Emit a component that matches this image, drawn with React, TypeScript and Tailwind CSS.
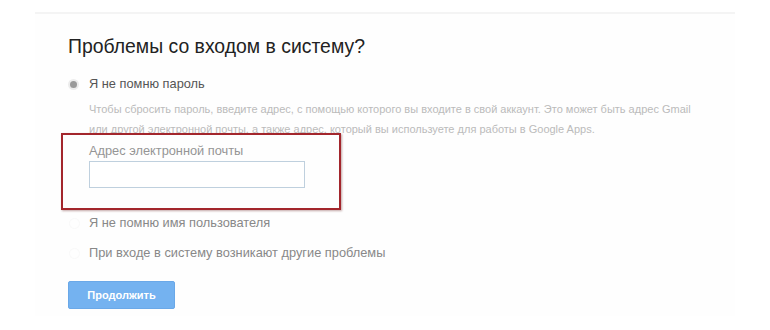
export default function App() {
  const font = { fontFamily: '"Liberation Sans", Arial, sans-serif' };
  return (
    <div className="relative w-[770px] h-[330px] bg-white overflow-hidden" style={font}>
      <div className="ml-[35px] mt-[12px] w-[700px] h-[304px] border-t-2 border-[#f4f4f4] bg-[#fefefe] pl-[33px] pt-[20px]">
        <h1 className="text-[19.4px] leading-[24px] text-[#222]">Проблемы со входом в систему?</h1>

        <div className="mt-[16px] flex items-center h-[20px]">
          <span className="w-[7px] h-[7px] rounded-full bg-[#9a9a9a] ring-2 ring-[#ececec] ml-[2px]" />
          <span className="ml-[12px] text-[12.8px] text-[#555]">Я не помню пароль</span>
        </div>

        <div className="ml-[21px]">
          <p className="mt-[5px] text-[11px] leading-[20px] text-[#bbbbbb] w-[640px]">
            Чтобы сбросить пароль, введите адрес, с помощью которого вы входите в свой аккаунт. Это может быть адрес Gmail
            <br />
            или другой электронной почты, а также адрес, который вы используете для работы в Google Apps.
          </p>

          <label className="block mt-[4px] text-[12.8px] leading-[16px] text-[#959595]">Адрес электронной почты</label>
          <input
            type="text"
            className="block mt-[2px] w-[216px] h-[27px] border border-[#bfd0de] bg-white outline-none"
          />

          <div className="relative mt-[25px] h-[20px] flex items-center">
            <span className="absolute -left-[20px] w-[11px] h-[11px] rounded-full border border-[#f9f9f9]" />
            <span className="text-[12.8px] text-[#888]">Я не помню имя пользователя</span>
          </div>

          <div className="relative mt-[10px] h-[20px] flex items-center">
            <span className="absolute -left-[20px] w-[11px] h-[11px] rounded-full border border-[#f9f9f9]" />
            <span className="text-[12.8px] text-[#888]">При входе в систему возникают другие проблемы</span>
          </div>
        </div>

        <button className="mt-[18px] w-[107px] h-[28px] rounded-[2px] bg-[#74b2f0] border border-[#6aa8e8] text-white text-[11px] font-bold">
          Продолжить
        </button>
      </div>

      {/* red annotation frame */}
      <div className="absolute left-[61px] top-[133px] w-[280px] h-[77px] border-2 border-[#a3262c] shadow-[1px_1px_2px_rgba(80,0,0,0.35)] pointer-events-none" />
    </div>
  );
}
